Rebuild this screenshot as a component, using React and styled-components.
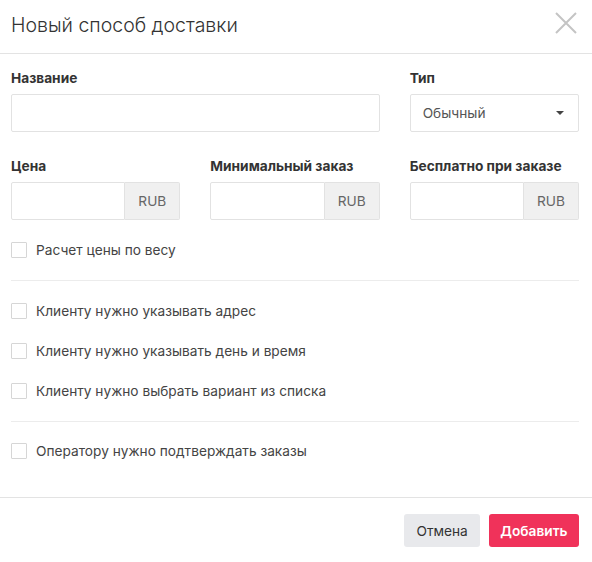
import React from 'react';
import styled, { createGlobalStyle } from 'styled-components';

const GlobalStyle = createGlobalStyle`
  body {
    margin: 0;
    background: #fff;
    font-family: Inter, "Noto Sans", sans-serif;
    color: #333;
  }
`;

const Modal = styled.div`
  width: 592px;
  height: 562px;
  background: #fff;
  display: flex;
  flex-direction: column;
`;

const Header = styled.div`
  height: 54px;
  border-bottom: 1px solid #e3e3e3;
  display: flex;
  align-items: center;
  justify-content: space-between;
  padding: 0 14px 0 11px;
  box-sizing: border-box;
`;

const Title = styled.h1`
  margin: -4px 0 0;
  font-size: 19.5px;
  font-weight: 300;
  color: #333;
`;

const Close = styled.button`
  border: 0;
  background: none;
  padding: 0;
  width: 24px;
  height: 24px;
  margin-top: -8px;
  cursor: pointer;
`;

const Body = styled.div`
  flex: 1;
  padding: 16px 13px 0 11px;
`;

const Grid = styled.div`
  display: grid;
  grid-template-columns: repeat(3, 1fr);
  column-gap: 30px;
  row-gap: 26px;
`;

const Field = styled.div`
  grid-column: span ${p => p.span || 1};
  display: flex;
  flex-direction: column;
  gap: 8px;
`;

const Label = styled.label`
  font-size: 13.7px;
  line-height: 16px;
  font-weight: 700;
  color: #333;
`;

const Input = styled.input`
  box-sizing: border-box;
  height: 38px;
  width: 100%;
  min-width: 0;
  border: 1px solid #e2e2e2;
  border-radius: 2px;
  padding: 0 10px;
  font: inherit;
  font-size: 13.7px;
  outline: none;
`;

const Group = styled.div`
  display: flex;
  height: 38px;

  ${Input} {
    flex: 1;
    border-radius: 2px 0 0 2px;
  }
`;

const Addon = styled.span`
  width: 54px;
  flex-shrink: 0;
  display: flex;
  align-items: center;
  justify-content: center;
  background: #f0f0f0;
  border: 1px solid #e2e2e2;
  border-left: 0;
  border-radius: 0 2px 2px 0;
  font-size: 13.7px;
  color: #666;
`;

const Select = styled.div`
  box-sizing: border-box;
  height: 38px;
  border: 1px solid #e2e2e2;
  border-radius: 2px;
  padding: 0 14px 0 12px;
  display: flex;
  align-items: center;
  justify-content: space-between;
  font-size: 13.7px;
  color: #555;

  &::after {
    content: '';
    border-left: 4px solid transparent;
    border-right: 4px solid transparent;
    border-top: 4px solid #444;
  }
`;

const Checks = styled.div`
  display: flex;
  flex-direction: column;
  gap: 24px;
  padding-top: ${p => p.top}px;
  padding-bottom: ${p => p.bottom}px;
  border-top: ${p => (p.divided ? '1px solid #ececec' : '0')};
`;

const Check = styled.label`
  display: flex;
  align-items: center;
  gap: 9px;
  font-size: 13.7px;
  line-height: 16px;
  color: #444;
  cursor: pointer;

  input {
    appearance: none;
    margin: 0;
    width: 16px;
    height: 16px;
    border: 1px solid #d6d6d6;
    border-radius: 1px;
    background: #fff;
  }
`;

const Footer = styled.div`
  border-top: 1px solid #e3e3e3;
  display: flex;
  justify-content: flex-end;
  gap: 9px;
  padding: 16px 13px 15px 0;
`;

const Button = styled.button`
  height: 33px;
  border: 0;
  border-radius: 3px;
  padding: 0 ${p => (p.primary ? 11.5 : 12)}px;
  font: inherit;
  font-size: 13.7px;
  font-weight: ${p => (p.primary ? 600 : 400)};
  background: ${p => (p.primary ? '#f0325a' : '#e8e9ec')};
  color: ${p => (p.primary ? '#fff' : '#333')};
  cursor: pointer;
`;

const checks = [
  'Клиенту нужно указывать адрес',
  'Клиенту нужно указывать день и время',
  'Клиенту нужно выбрать вариант из списка',
];

const prices = ['Цена', 'Минимальный заказ', 'Бесплатно при заказе'];

export default function App() {
  return (
    <Modal>
      <GlobalStyle />
      <Header>
        <Title>Новый способ доставки</Title>
        <Close aria-label="Закрыть">
          <svg width="24" height="24" viewBox="0 0 24 24">
            <path d="M2 2 L22 22 M22 2 L2 22" stroke="#c4c4c4" strokeWidth="2" fill="none" />
          </svg>
        </Close>
      </Header>
      <Body>
        <Grid>
          <Field span={2}>
            <Label>Название</Label>
            <Input />
          </Field>
          <Field>
            <Label>Тип</Label>
            <Select>Обычный</Select>
          </Field>
          {prices.map(name => (
            <Field key={name}>
              <Label>{name}</Label>
              <Group>
                <Input />
                <Addon>RUB</Addon>
              </Group>
            </Field>
          ))}
        </Grid>
        <Checks top={22} bottom={22}>
          <Check><input type="checkbox" />Расчет цены по весу</Check>
        </Checks>
        <Checks divided top={22} bottom={22}>
          {checks.map(text => (
            <Check key={text}><input type="checkbox" />{text}</Check>
          ))}
        </Checks>
        <Checks divided top={21}>
          <Check><input type="checkbox" />Оператору нужно подтверждать заказы</Check>
        </Checks>
      </Body>
      <Footer>
        <Button>Отмена</Button>
        <Button primary>Добавить</Button>
      </Footer>
    </Modal>
  );
}
